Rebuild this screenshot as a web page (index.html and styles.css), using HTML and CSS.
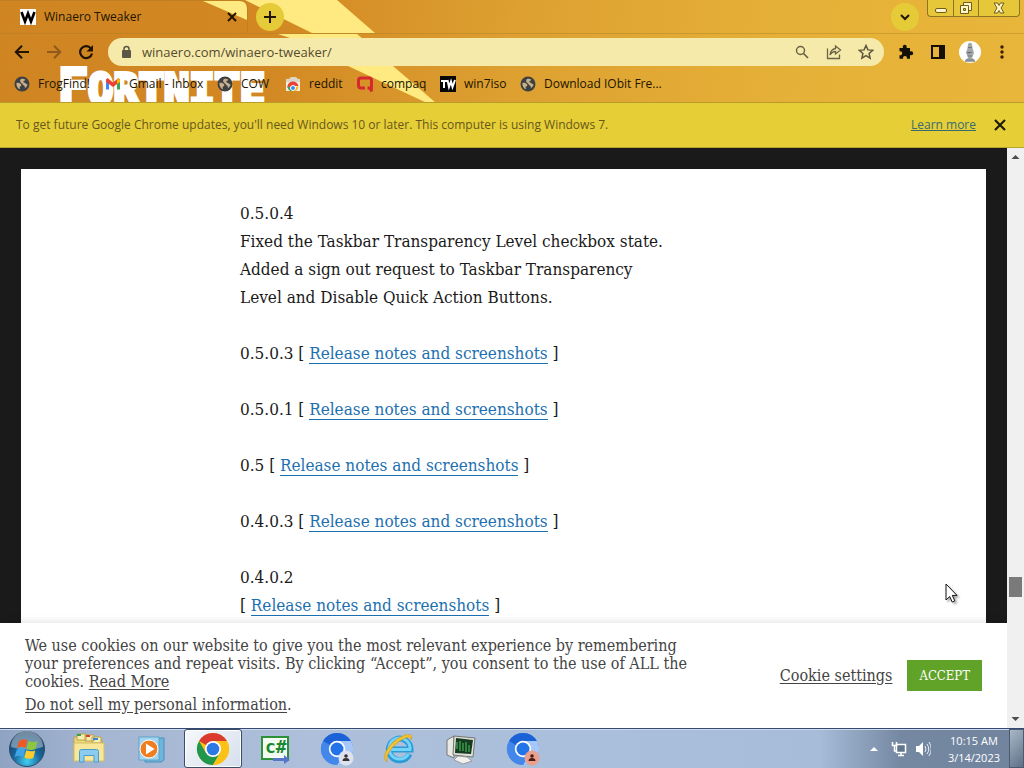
FILE: index.html
```html
<!DOCTYPE html>
<html lang="en">
<head>
<meta charset="utf-8">
<title>Winaero Tweaker</title>
<link rel="stylesheet" href="styles.css">
</head>
<body>
<svg class="defs" aria-hidden="true">
  <defs>
    <symbol id="globe" viewBox="0 0 16 16"><circle cx="8" cy="8" r="7.500" fill="#3c4043"/><path d="M2.500 7C4 6.500 6 7 7 8.300c.8 1.100.1 1.900-1 2.200-.6.300-.3 1.500 0 2.800C4 12.500 2 10 2.500 7zM7 3c1.600-.6 3.200-.2 4.300.8-.6 1.200-1.600.8-2 1.800C9 6.800 11 6.700 11.800 7.600c.7.800 1.600.6 1.700 1-.4 1.800-1.400 3-2.700 3.700.4-1.600-.2-2.300-1.300-3.100C8.600 8.300 8 7.300 6.800 6.500 5.800 5.600 6 3.700 7 3z" fill="#c9b08a"/></symbol>
    <symbol id="chromium" viewBox="0 0 34 34"><circle cx="17" cy="17" r="16" fill="#4487ea"/><path d="M17 17 3.100 9A16 16 0 0 1 30.900 9z" fill="#1a62d6"/><path d="M17 9h13.900A16 16 0 0 1 17 33l7-12z" fill="#a6c8f8"/><path d="M3.100 9A16 16 0 0 0 17 33l7-12H10z" fill="#4487ea"/><circle cx="17" cy="17" r="8.200" fill="#fff"/><circle cx="17" cy="17" r="6.500" fill="#2374e8"/></symbol>
  </defs>
</svg>

<header class="browser">
  <svg class="shards" width="450" height="103" viewBox="0 0 450 103" aria-hidden="true">
    <path d="M203 1h37q7 0 7 7v12zM245 0h92l38 33h-63zM278 34h79l6 5h-70zM348 66h45l43 37h-9z" fill="#feea80"/>
  </svg>
  <div class="wordmark" aria-hidden="true">FORTNITE</div>

  <div class="tabstrip">
    <div class="tab">
      <svg width="16" height="16" viewBox="0 0 16 16"><path fill="#fff" d="M0 0h16v16H0z"/><path d="M1.500 3 5 12.500 8 4.500l3 8L14.500 3" fill="none" stroke="#000" stroke-width="2.600"/></svg>
      <span class="tab-title">Winaero Tweaker</span>
      <button class="plain" aria-label="Close tab"><svg width="14" height="14" viewBox="0 0 14 14"><path d="m3 3 8 8m0-8-8 8" stroke="#211400" stroke-width="2"/></svg></button>
    </div>
    <button class="round" aria-label="New tab"><svg width="14" height="14" viewBox="0 0 14 14"><path d="M7 1v12M1 7h12" stroke="#211400" stroke-width="2"/></svg></button>
    <button class="round search-tabs" aria-label="Search tabs"><svg width="12" height="12" viewBox="0 0 12 12"><path d="m2 4 4 4 4-4" fill="none" stroke="#211400" stroke-width="2"/></svg></button>
    <div class="window-buttons">
      <button aria-label="Minimize"><svg width="14" height="14" viewBox="0 0 14 14"><rect x="1.500" y="7.500" width="11" height="4" rx="1.500" fill="#fff6c8" stroke="#6f5b1c"/></svg></button>
      <button aria-label="Restore"><svg width="14" height="14" viewBox="0 0 14 14"><path d="M4.500 1.500h8v8h-8z" fill="#fff6c8" stroke="#6f5b1c"/><path d="M1.500 4.500h8v8h-8z" fill="#fff6c8" stroke="#6f5b1c"/><path d="M4.500 7.500h2v2h-2z" fill="#e6cf3a" stroke="#6f5b1c"/></svg></button>
      <button aria-label="Close"><svg width="14" height="14" viewBox="0 0 14 14"><path d="M2 2h3.500L7 4.500 8.500 2H12L9 7l3 5H8.500L7 9.500 5.500 12H2l3-5z" fill="#fff6c8" stroke="#6f5b1c"/></svg></button>
    </div>
  </div>

  <div class="toolbar">
    <div class="nav">
      <button class="plain" aria-label="Back"><svg width="16" height="16" viewBox="0 0 16 16"><path d="M15 8H2m6-6.200L1.800 8 8 14.200" fill="none" stroke="#211400" stroke-width="2"/></svg></button>
      <button class="plain" aria-label="Forward"><svg width="16" height="16" viewBox="0 0 16 16"><path d="M1 8h13M8 1.800 14.200 8 8 14.200" fill="none" stroke="#8f5a1b" stroke-width="2"/></svg></button>
      <button class="plain" aria-label="Reload"><svg width="16" height="16" viewBox="0 0 16 16"><path d="M13 4.600A6 6 0 1 0 14 9.500" fill="none" stroke="#211400" stroke-width="2.200"/><path d="M15 1v6.500H8.500z" fill="#211400"/></svg></button>
    </div>
    <div class="omnibox">
      <svg width="12" height="14" viewBox="0 0 12 14"><rect x="2" y="5" width="9" height="8" rx="1" fill="#5c5646"/><path d="M4 6V4a2.500 2.500 0 0 1 5 0v2" fill="none" stroke="#5c5646" stroke-width="1.500"/></svg>
      <input class="url" type="text" aria-label="Address" value="winaero.com/winaero-tweaker/">
      <button class="plain" aria-label="Zoom"><svg width="16" height="16" viewBox="0 0 16 16"><circle cx="6.500" cy="6.500" r="4" fill="none" stroke="#6b6347" stroke-width="1.500"/><path d="m9.500 9.500 4.500 4.500" stroke="#6b6347" stroke-width="1.700"/></svg></button>
      <button class="plain" aria-label="Share"><svg width="16" height="16" viewBox="0 0 16 16"><path d="M1.500 4.500v10h12v-4M9.500 2l5 4-5 4V7.500C7 7.500 5.500 8.500 4 11c.5-4 2.500-6 5.500-6.500z" fill="none" stroke="#6b6347" stroke-width="1.300"/></svg></button>
      <button class="plain" aria-label="Bookmark this page"><svg width="16" height="16" viewBox="0 0 16 16"><path d="m8 1.500 1.900 4.400 4.800.4-3.600 3.200 1 4.700L8 11.700l-4.100 2.500 1-4.700L1.300 6.300l4.800-.4z" fill="none" stroke="#5e563c" stroke-width="1.500"/></svg></button>
    </div>
    <div class="actions">
      <button class="plain" aria-label="Extensions"><svg width="16" height="16" viewBox="0 0 16 16"><path d="M1.500 4H5c-.7-1.800.2-3.200 1.700-3.200S9.200 2.200 8.600 4H12v3.600c1.700-.7 3.200.1 3.200 1.700s-1.500 2.400-3.200 1.700v3.800H8.800c.5-1.600-.4-2.800-1.800-2.800s-2.400 1.200-1.800 2.800H1.500v-3.600c1.600.5 2.700-.5 2.700-1.900S3.100 7 1.500 7.400z" fill="#141008"/></svg></button>
      <button class="plain" aria-label="Side panel"><svg width="16" height="16" viewBox="0 0 16 16"><path d="M2 2h12v12H2z" fill="none" stroke="#141008" stroke-width="2"/><path d="M9 2h5v12H9z" fill="#141008"/></svg></button>
      <button class="plain avatar" aria-label="Profile"><svg width="22" height="22" viewBox="0 0 22 22"><circle cx="11" cy="11" r="11" fill="#fff"/><path d="M9 3q2-3 4 0l.5 4 1.500 5-2 5 3 2v2H6v-2l3-2-2-5 1.500-5z" fill="#a4a7aa"/><path d="M9 6.500h4M8 11l2 1 3-1m-4 4h4m-6 4h8" stroke="#74787d"/></svg></button>
      <button class="plain" aria-label="Menu"><svg width="16" height="16" viewBox="0 0 16 16" fill="#3a1c06"><circle cx="8" cy="3" r="1.700"/><circle cx="8" cy="8" r="1.700"/><circle cx="8" cy="13" r="1.700"/></svg></button>
    </div>
  </div>

  <nav class="bookmarks" aria-label="Bookmarks">
    <a href="#"><svg width="16" height="16"><use href="#globe"/></svg>FrogFind!</a>
    <a href="#"><svg width="16" height="16" viewBox="0 0 16 16"><path d="M1 4v9.500h3V7z" fill="#4285f4"/><path d="M12 7v6.500h3V4z" fill="#34a853"/><path d="M1 3.500 2.500 2 8 6.500 13.500 2 15 3.500V6l-7 5-7-5z" fill="#ea4335"/><path d="m12 4 1.500-1.500L15 4v2l-3 2z" fill="#fbbc04"/></svg>Gmail - Inbox</a>
    <a href="#"><svg width="16" height="16"><use href="#globe"/></svg>COW</a>
    <a href="#"><svg width="16" height="16" viewBox="0 0 16 16"><path d="M1 3h14v12H1z" fill="#f3eee4"/><path d="M1 3h3l2-2h5l2 2h2v3H1z" fill="#dcd6c9"/><path d="M2.500 12a5.500 5.500 0 0 1 11-2H8z" fill="#e84335"/><path d="M2.500 10A6 6 0 0 0 5 15h3l-2-3z" fill="#34a853"/><path d="M13.500 10A6 6 0 0 1 11 15H8l3-4z" fill="#fbbc05"/><circle cx="8" cy="12" r="2.500" fill="#4285f4" stroke="#fff"/></svg>reddit</a>
    <a href="#"><svg width="16" height="16" viewBox="0 0 16 16"><path d="M8 12H4Q1.500 12 1.500 9.500v-5Q1.500 2 4 2h8q2.500 0 2.500 2.500V12h-4m2 0 2.500 3.500" fill="none" stroke="#d7282f" stroke-width="3"/></svg>compaq</a>
    <a href="#"><svg width="16" height="16" viewBox="0 0 16 16"><path d="M0 0h16v16H0z" fill="#060508"/><path d="M1 5h6M4 5v7M7.500 4l1.500 7 2-5.500 1.500 5.500L15 4" fill="none" stroke="#fff" stroke-width="2"/></svg>win7iso</a>
    <a href="#"><svg width="16" height="16"><use href="#globe"/></svg>Download IObit Fre...</a>
  </nav>

  <div class="infobar">
    <span class="info-text">To get future Google Chrome updates, you'll need Windows 10 or later. This computer is using Windows 7.</span>
    <a href="#">Learn more</a>
    <button class="plain" aria-label="Dismiss"><svg width="14" height="14" viewBox="0 0 14 14"><path d="m2 2 10 10m0-10L2 12" stroke="#211a08" stroke-width="2.200"/></svg></button>
  </div>
</header>

<div class="viewport">
  <main class="page">
    <article class="article">
      <p>0.5.0.4<br>Fixed the Taskbar Transparency Level checkbox state.<br>Added a sign out request to Taskbar Transparency Level and Disable Quick Action Buttons.</p>
      <p>0.5.0.3 [ <a href="#">Release notes and screenshots</a> ]</p>
      <p>0.5.0.1 [ <a href="#">Release notes and screenshots</a> ]</p>
      <p>0.5 [ <a href="#">Release notes and screenshots</a> ]</p>
      <p>0.4.0.3 [ <a href="#">Release notes and screenshots</a> ]</p>
      <p>0.4.0.2<br>[ <a href="#">Release notes and screenshots</a> ]</p>
    </article>
    <section class="cookies" aria-label="Cookie consent">
      <div class="cookie-text">
        <p>We use cookies on our website to give you the most relevant experience by remembering your preferences and repeat visits. By clicking “Accept”, you consent to the use of ALL the cookies. <a href="#">Read More</a></p>
        <p><a href="#">Do not sell my personal information</a>.</p>
      </div>
      <a class="cookie-settings" href="#">Cookie settings</a>
      <button class="accept">ACCEPT</button>
    </section>
    <svg class="cursor" width="14" height="21" viewBox="0 0 14 21" aria-hidden="true"><path d="M1 1v16l3.700-3.500L7.200 19l2.600-1.200L7.300 12.400H12z" fill="#fff" stroke="#111"/></svg>
  </main>
  <div class="scrollbar">
    <svg width="17" height="17" viewBox="0 0 17 17"><path d="m4.500 11 4-4 4 4z" fill="#4d4d4d"/></svg>
    <div class="track"><div class="before"></div><div class="thumb"></div><div class="after"></div></div>
    <svg width="17" height="17" viewBox="0 0 17 17"><path d="m4.500 6 4 4 4-4z" fill="#4d4d4d"/></svg>
  </div>
</div>

<footer class="taskbar">
  <button class="start" aria-label="Start"><svg width="38" height="38" viewBox="0 0 38 38"><defs><radialGradient id="orb" cx=".5" cy=".85" r=".85"><stop offset="0" stop-color="#43d0f0"/><stop offset=".45" stop-color="#17679c"/><stop offset="1" stop-color="#1b3a5c"/></radialGradient></defs><circle cx="19" cy="19" r="17.500" fill="url(#orb)" stroke="#304a66"/><path d="M3 17A16 16 0 0 1 35 17Q19 22 3 17z" fill="#b9cbd8" opacity=".55"/><path d="M11 11q4-3 8.500-.5L17.500 18q-4-2.500-8.500.3z" fill="#ee5a24"/><path d="M20.500 11q4.500 2.200 9 0l-2 8q-4.500 2-9-.3z" fill="#8cc63f"/><path d="M8.700 19.700q4.500-2.600 8.500-.2L15 27q-4-2.500-8.500.2z" fill="#3fa4e8"/><path d="M18.300 20.200q4.500 2.200 9 .2l-2 7.500q-4.500 2-9-.3z" fill="#fdcb2f"/></svg></button>
  <div class="apps">
    <button aria-label="Windows Explorer"><svg width="34" height="32" viewBox="0 0 34 32"><path d="M2 4h9l2 3h17v20H2z" fill="#eed978" stroke="#b9a24c"/><path d="M5 1h9v6H5zM13 2h9v6h-9zM20 4h9v6h-9z" fill="#f7edb0" stroke="#b9a24c"/><path d="M5 1h4v2H5z" fill="#35a04c"/><path d="M14 2h4v2h-4z" fill="#d8402a"/><path d="M21 5h5v2h-5z" fill="#3b87cf"/><path d="M2 10h30v18H2z" fill="#f7e79b" stroke="#d5bd62"/><path d="M7.500 29V18.500q0-2 2-2h15q2 0 2 2V29H22v-6.500H12V29z" fill="#8accf0" stroke="#4c9ccb"/></svg></button>
    <button aria-label="Windows Media Player"><svg width="32" height="32" viewBox="0 0 32 32"><path d="M10 5h19v22l-3 2H10z" fill="#6fb4da" stroke="#4a92ba"/><path d="M4 4h20v23H4z" fill="#a5d5ee" stroke="#5ba4cb"/><circle cx="14" cy="16" r="9" fill="#ef7d22" stroke="#fff"/><path d="m11 10.500 8.500 5.500-8.500 5.500z" fill="#fff"/></svg></button>
    <button class="active" aria-label="Google Chrome"><svg width="34" height="34" viewBox="0 0 34 34"><circle cx="17" cy="17" r="16" fill="#fbc116"/><path d="M17 17 3.100 9A16 16 0 0 1 30.900 9H17z" fill="#db3a2e"/><path d="M3.100 9A16 16 0 0 0 17 33l7-12-7-4-7 4z" fill="#20974c"/><path d="M30.900 9A16 16 0 0 1 17 33l7-12V9z" fill="#fbc116"/><circle cx="17" cy="17" r="8" fill="#fff"/><circle cx="17" cy="17" r="6.300" fill="#2c78e4"/></svg></button>
    <button aria-label="C# editor"><svg width="32" height="32" viewBox="0 0 32 32"><path d="M3 4h26v22H3z" fill="#fff" stroke="#2c9238" stroke-width="2"/><path d="M5 6h22v18H5z" fill="#f2fbf0"/><text class="csharp" x="6" y="20">c#</text><path d="M14 25h11v-3l6 5-6 4v-3H14z" fill="#5677c9"/></svg></button>
    <button aria-label="Chromium profile 1"><svg width="34" height="34" viewBox="0 0 34 34"><use href="#chromium"/><circle cx="26" cy="26" r="7.500" fill="#dde2ee"/><circle cx="26" cy="24" r="1.800" fill="#333"/><path d="M22.500 29q0-3 3.500-3t3.500 3z" fill="#333"/></svg></button>
    <button aria-label="Internet Explorer"><svg width="34" height="34" viewBox="0 0 34 34"><path d="M27.500 22A10.800 10.800 0 1 1 28.500 17.500H9" fill="none" stroke="#2b9bd8" stroke-width="6"/><path d="M26.500 22A10.500 10.500 0 1 1 28 17.500H9" fill="none" stroke="#75d3f7" stroke-width="3"/><path d="M5 30C-2 25 8 9 21 4c7-3 10-1 8 4 0-4-4-3-8-1C11 12 3 23 5 30z" fill="#f4c430" stroke="#d39b16" stroke-width=".7"/></svg></button>
    <button aria-label="System monitor"><svg width="34" height="32" viewBox="0 0 34 32"><path d="m3 7 7-4v22l-7-3z" fill="#e8e9e3" stroke="#777"/><path d="m10 3 21 2-2 19-20-2z" fill="#dedfd8" stroke="#73766f"/><path d="m12 5 17 2-2 14-16-1z" fill="#173b20"/><path d="M13 16V9m3 9V8m3 10v-8m3 9V9m3 10v-7" stroke="#3a9a4a" stroke-width="1.500"/><path d="m14 23 9 1 5 4-9 3-9-4z" fill="#f0f1ee" stroke="#999"/></svg></button>
    <button aria-label="Chromium profile 2"><svg width="34" height="34" viewBox="0 0 34 34"><use href="#chromium"/><circle cx="26" cy="26" r="7.500" fill="#eaa08d"/><circle cx="26" cy="24" r="1.800" fill="#4b1b14"/><path d="M22.500 29q0-3 3.500-3t3.500 3z" fill="#4b1b14"/></svg></button>
  </div>
  <div class="tray">
    <svg width="10" height="10" viewBox="0 0 10 10"><path d="m1 7 4-4 4 4z" fill="#fff"/></svg>
    <svg width="16" height="16" viewBox="0 0 16 16"><path d="M5.500 3.500h9v8h-9zM7 14.500h6M10 12v2" fill="#60758e" stroke="#fff" stroke-width="1.500"/><path d="M1.500 1v3.500h4V1M3.500 4.500V10H5" fill="none" stroke="#fff" stroke-width="1.500"/></svg>
    <svg width="16" height="16" viewBox="0 0 16 16"><path d="M1 5h3l4-4v14l-4-4H1z" fill="#fff"/><path d="M10 5q2 3 0 6m2-8q3.500 5 0 10m2-12q4.500 7 0 14" fill="none" stroke="#e8eef5"/></svg>
    <div class="clock"><time>10:15 AM</time><time>3/14/2023</time></div>
  </div>
  <button class="show-desktop" aria-label="Show desktop"></button>
</footer>
</body>
</html>
```
FILE: styles.css
```css
* { box-sizing: border-box; }

body {
  margin: 0;
  height: 100vh;
  display: flex;
  flex-direction: column;
  overflow: hidden;
  font: 12px/16px "Open Sans", sans-serif;
  color: #211400;
}

svg { display: block; flex: none; }
p { margin: 0; }
button { margin: 0; padding: 0; border: 0; background: none; font: inherit; color: inherit; }
.plain { display: grid; place-items: center; }
.defs { position: absolute; width: 0; height: 0; }

/* Browser frame */
.browser {
  position: relative;
  flex: none;
  overflow: hidden;
  background: linear-gradient(95deg, #cf8522 0%, #d28722 25%, #dda031 50%, #e5b037 75%, #e8b63a 100%);
}
.shards { position: absolute; left: 0; top: 0; }
.wordmark {
  position: absolute;
  left: 58px;
  top: 61px;
  font: bold 42px/52px "DejaVu Sans Mono", monospace;
  color: #fff;
  -webkit-text-stroke: 4px #fff;
}
.wordmark::first-letter { font-size: 50px; }

.tabstrip {
  position: relative;
  display: flex;
  align-items: flex-start;
  height: 34px;
  border-bottom: 1px solid #a87d2066;
}
.tab {
  display: flex;
  align-items: center;
  gap: 8px;
  width: 248px;
  height: 33px;
  padding: 0 8px 0 20px;
  border-top: 1px solid #b27a2088;
  border-right: 1px solid #b27a2088;
  border-radius: 0 8px 0 0;
}
.tab-title { flex: 1; }
.round {
  display: grid;
  place-items: center;
  width: 28px;
  height: 28px;
  margin: 3px 0 0 8px;
  border-radius: 50%;
  background: #e5cb38;
}
.search-tabs { margin-left: auto; }
.window-buttons {
  display: flex;
  height: 17px;
  margin: 0 4px 0 8px;
  border: 1px solid #8f7424;
  border-top: 0;
  border-radius: 0 0 4px 4px;
  background: #e6c739;
}
.window-buttons button { display: grid; place-items: center; width: 25px; }
.window-buttons button + button { border-left: 1px solid #8f7424; }
.window-buttons button:last-child { width: 41px; }

.toolbar { position: relative; display: flex; align-items: center; height: 36px; padding-right: 14px; }
.nav { display: flex; gap: 16px; padding: 0 14px; }
.omnibox {
  flex: 1;
  display: flex;
  align-items: center;
  height: 28px;
  padding: 0 10px 0 12px;
  gap: 16px;
  border-radius: 14px;
  background: #f5eaaa;
}
.url {
  flex: 1;
  min-width: 0;
  margin-left: -6px;
  padding: 0;
  border: 0;
  outline: 0;
  background: none;
  font: 13px/20px "Open Sans", sans-serif;
  color: #554c30;
}
.actions { display: flex; align-items: center; gap: 16px; padding-left: 14px; }
.avatar { margin: 0 -3px; }

.bookmarks {
  position: relative;
  display: grid;
  grid-template-columns: 91px 112px 68px 72px 83px 80px 1fr;
  align-items: center;
  height: 32px;
  padding: 0 14px 4px;
}
.bookmarks a { display: flex; align-items: center; gap: 8px; white-space: nowrap; color: #211400; text-decoration: none; }

.infobar {
  position: relative;
  display: flex;
  align-items: center;
  height: 46px;
  padding: 0 17px 0 16px;
  gap: 17px;
  border-top: 1px solid #b99b2b;
  border-bottom: 1px solid #b9a52d;
  background: #e6ce37;
  color: #67571b;
}
.info-text { flex: 1; }
.infobar a { color: #386b70; }

/* Web page */
.viewport { flex: 1; min-height: 0; display: flex; }
.page { position: relative; flex: 1; overflow: hidden; padding: 21px 21px 0; background: #1a1a1a; }
.article {
  min-height: 100%;
  padding: 30px 300px 28px 219px;
  background: #fff;
  color: #1a1a1a;
  font: 17px/28px "DejaVu Serif Condensed", "DejaVu Serif", serif;
}
.article p { margin-bottom: 28px; max-width: 430px; }
.article a { color: #1d70b0; text-decoration: none; border-bottom: 1px solid #1d70b0; }

.cookies {
  position: absolute;
  left: 0;
  right: 0;
  bottom: 0;
  display: flex;
  align-items: center;
  gap: 15px;
  padding: 14px 25px;
  background: #fff;
  box-shadow: 0 -1px 8px #0000001f;
  color: #444;
  font: 16px/18px "DejaVu Serif Condensed", "DejaVu Serif", serif;
}
.cookies a { color: #444; text-underline-offset: 2px; }
.cookie-text { flex: 1; }
.cookie-text p { max-width: 680px; }
.cookie-text p + p { margin-top: 5px; }
.accept { padding: 0 12px; height: 31px; background: #61a229; color: #fff; font-size: 13px; }
.cursor { position: absolute; left: 945px; top: 435px; filter: drop-shadow(2px 2px 1px #0005); }

.scrollbar { width: 17px; display: flex; flex-direction: column; background: #f0f0f0; }
.track { flex: 1; display: flex; flex-direction: column; padding: 0 2px; }
.before { flex: 412; }
.thumb { height: 20px; background: #7a7a7a; }
.after { flex: 114; }

/* Windows taskbar */
.taskbar {
  flex: none;
  display: flex;
  align-items: stretch;
  height: 40px;
  border-top: 1px solid #344a72;
  box-shadow: inset 0 1px #cfdcec;
  background: linear-gradient(90deg, #8fa3c3 0, #a4b6d2 10%, #adbfda 30%, #a9bfdb 60%, #a6bcd8 80%, #7588a2 88%, #71849d 100%);
}
.start { width: 38px; margin: 0 14px 0 8px; }
.apps { flex: 1; display: flex; gap: 4px; }
.apps button { display: grid; place-items: center; width: 58px; }
.apps .active { border: 1px solid #3b4c69; border-radius: 3px; background: linear-gradient(135deg, #f6f8fb, #d5dfec); box-shadow: inset 0 0 0 1px #fff; }
.csharp { font: bold 18px "DejaVu Sans Mono", monospace; fill: #1b8730; }
.tray { display: flex; align-items: center; gap: 8px; color: #fff; }
.tray svg:first-child { margin-right: 4px; }
.clock { display: flex; flex-direction: column; align-items: center; margin: 0 9px; font-size: 11px; line-height: 17px; }
.show-desktop { width: 15px; border: 1px solid #4b5b70; background: linear-gradient(135deg, #a9b7c6, #5f7188); }
```
